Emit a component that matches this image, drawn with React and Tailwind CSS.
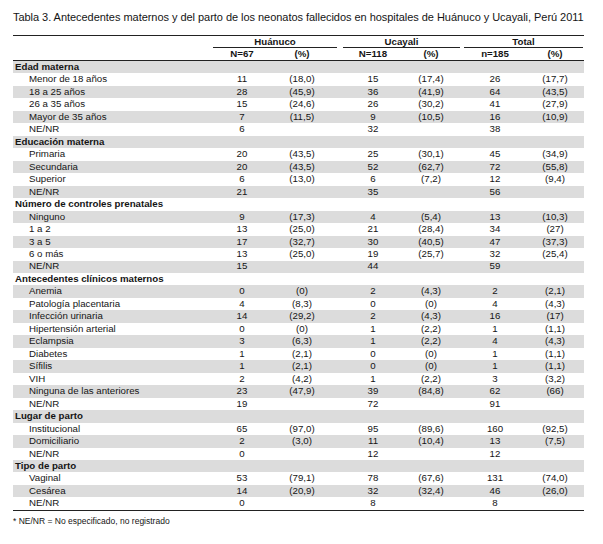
const sections = [
  {
    title: "Edad materna",
    rows: [
      ["Menor de 18 años", "11", "(18,0)", "15", "(17,4)", "26", "(17,7)"],
      ["18 a 25 años", "28", "(45,9)", "36", "(41,9)", "64", "(43,5)"],
      ["26 a 35 años", "15", "(24,6)", "26", "(30,2)", "41", "(27,9)"],
      ["Mayor de 35 años", "7", "(11,5)", "9", "(10,5)", "16", "(10,9)"],
      ["NE/NR", "6", "", "32", "", "38", ""],
    ],
  },
  {
    title: "Educación materna",
    rows: [
      ["Primaria", "20", "(43,5)", "25", "(30,1)", "45", "(34,9)"],
      ["Secundaria", "20", "(43,5)", "52", "(62,7)", "72", "(55,8)"],
      ["Superior", "6", "(13,0)", "6", "(7,2)", "12", "(9,4)"],
      ["NE/NR", "21", "", "35", "", "56", ""],
    ],
  },
  {
    title: "Número de controles prenatales",
    rows: [
      ["Ninguno", "9", "(17,3)", "4", "(5,4)", "13", "(10,3)"],
      ["1 a 2", "13", "(25,0)", "21", "(28,4)", "34", "(27)"],
      ["3 a 5", "17", "(32,7)", "30", "(40,5)", "47", "(37,3)"],
      ["6  o más", "13", "(25,0)", "19", "(25,7)", "32", "(25,4)"],
      ["NE/NR", "15", "", "44", "", "59", ""],
    ],
  },
  {
    title: "Antecedentes clínicos maternos",
    rows: [
      ["Anemia", "0", "(0)", "2", "(4,3)", "2", "(2,1)"],
      ["Patología placentaria", "4", "(8,3)", "0", "(0)", "4", "(4,3)"],
      ["Infección urinaria", "14", "(29,2)", "2", "(4,3)", "16", "(17)"],
      ["Hipertensión arterial", "0", "(0)", "1", "(2,2)", "1", "(1,1)"],
      ["Eclampsia", "3", "(6,3)", "1", "(2,2)", "4", "(4,3)"],
      ["Diabetes", "1", "(2,1)", "0", "(0)", "1", "(1,1)"],
      ["Sífilis", "1", "(2,1)", "0", "(0)", "1", "(1,1)"],
      ["VIH", "2", "(4,2)", "1", "(2,2)", "3", "(3,2)"],
      ["Ninguna de las anteriores", "23", "(47,9)", "39", "(84,8)", "62", "(66)"],
      ["NE/NR", "19", "", "72", "", "91", ""],
    ],
  },
  {
    title: "Lugar de parto",
    rows: [
      ["Institucional", "65", "(97,0)", "95", "(89,6)", "160", "(92,5)"],
      ["Domiciliario", "2", "(3,0)", "11", "(10,4)", "13", "(7,5)"],
      ["NE/NR", "0", "", "12", "", "12", ""],
    ],
  },
  {
    title: "Tipo de parto",
    rows: [
      ["Vaginal", "53", "(79,1)", "78", "(67,6)", "131", "(74,0)"],
      ["Cesárea", "14", "(20,9)", "32", "(32,4)", "46", "(26,0)"],
      ["NE/NR", "0", "", "8", "", "8", ""],
    ],
  },
];

// column offsets so each number sits on its printed centre
const cellMargins = ["ml-[4px]", "ml-[10px]", "ml-[21px]", "ml-[8px]", "ml-[14px]", "ml-[10px]"];

function Cells({ values, bold }) {
  return values.map((v, i) => (
    <div key={i} className={`${cellMargins[i]} w-[50px] flex justify-center ${bold ? "font-bold" : ""}`}>
      {v}
    </div>
  ));
}

export default function App() {
  let idx = 0;
  const rows = [];
  sections.forEach((s) => {
    rows.push({ label: s.title, cat: true, values: ["", "", "", "", "", ""], n: idx++ });
    s.rows.forEach((r) => rows.push({ label: r[0], cat: false, values: r.slice(1), n: idx++ }));
  });

  return (
    <div className="w-[603px] h-[544px] bg-white text-[#151515] pl-[13px] pt-[10px]" style={{ fontFamily: '"Liberation Sans", Arial, sans-serif' }}>
      <div className="text-[11px] leading-[14px] tracking-[-0.04px] whitespace-nowrap">
        Tabla 3. Antecedentes maternos y del parto de los neonatos fallecidos en hospitales de Huánuco y Ucayali, Perú 2011
      </div>

      <div className="w-[571px] mt-[11px] text-[9.7px]">
        {/* header */}
        <div className="border-t border-[#222] pt-[1px]">
          <div className="flex h-[11px] font-bold">
            <div className="w-[200px]" />
            <div className="w-[124px] flex justify-center items-center border-b border-[#222]">Huánuco</div>
            <div className="ml-[6px] w-[117px] flex justify-center items-center border-b border-[#222]">Ucayali</div>
            <div className="ml-[4px] w-[119px] flex justify-center items-center border-b border-[#222]">Total</div>
          </div>
          <div className="flex h-[13px] items-center font-bold border-b-[1.5px] border-[#222]">
            <div className="w-[200px]" />
            <Cells values={["N=67", "(%)", "N=118", "(%)", "n=185", "(%)"]} bold />
          </div>
        </div>

        {/* body */}
        <div className="border-b-[1.5px] border-[#222]">
          {rows.map((r) => (
            <div key={r.n} className={`flex items-center h-[12.47px] ${r.n % 2 === 0 ? "bg-[#dcdcdc]" : "bg-white"}`}>
              <div className={`w-[200px] whitespace-nowrap ${r.cat ? "pl-[2px] font-bold" : "pl-[16px]"}`}>{r.label}</div>
              <Cells values={r.values} />
            </div>
          ))}
        </div>
      </div>

      <div className="mt-[5px] text-[8.5px] leading-[10px]">* NE/NR = No especificado, no registrado</div>
    </div>
  );
}
